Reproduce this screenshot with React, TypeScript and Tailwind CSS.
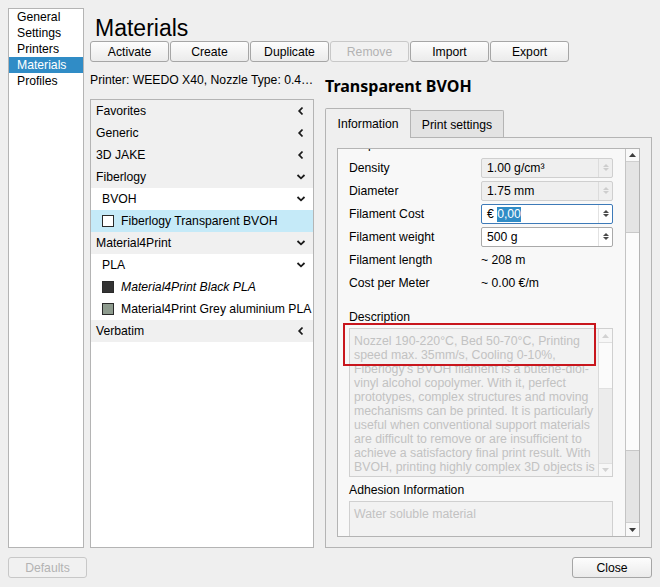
import React from "react";

type Dir = "left" | "down";

function Chevron({ dir }: { dir: Dir }) {
  return dir === "left" ? (
    <svg width="8" height="10" viewBox="0 0 8 10">
      <polyline points="5.5,1.5 2.2,5 5.5,8.5" fill="none" stroke="#1a1a1a" strokeWidth="1.8" />
    </svg>
  ) : (
    <svg width="10" height="8" viewBox="0 0 10 8">
      <polyline points="1.5,2 5,5.3 8.5,2" fill="none" stroke="#1a1a1a" strokeWidth="1.8" />
    </svg>
  );
}

function Tri({ up, color, w = 7, h = 4 }: { up: boolean; color: string; w?: number; h?: number }) {
  return (
    <svg width={w} height={h} viewBox={`0 0 ${w} ${h}`}>
      {up ? (
        <polygon points={`0,${h} ${w / 2},0 ${w},${h}`} fill={color} />
      ) : (
        <polygon points={`0,0 ${w / 2},${h} ${w},0`} fill={color} />
      )}
    </svg>
  );
}

function Btn({ label, disabled }: { label: string; disabled?: boolean }) {
  return (
    <div
      className={
        "w-[79px] h-[21px] flex items-center justify-center pt-[2px] leading-[15px] rounded-[3px] border " +
        (disabled
          ? "border-[#c8c8c8] bg-[#f1f1f1] text-[#b3b3b3]"
          : "border-[#a6a6a6] bg-linear-to-b from-[#fdfdfd] to-[#ebebeb] text-black")
      }
    >
      {label}
    </div>
  );
}

function Sidebar() {
  const items = ["General", "Settings", "Printers", "Materials", "Profiles"];
  return (
    <div className="w-[76px] border border-[#b4b4b4] bg-white">
      {items.map((i) => (
        <div
          key={i}
          className={
            "h-[16px] pl-[8px] leading-[14px] pt-[1px] pb-[1px] " +
            (i === "Materials" ? "bg-[#308cc6] text-white" : "")
          }
        >
          {i}
        </div>
      ))}
    </div>
  );
}

type Row = {
  t: "h" | "s" | "m";
  label: string;
  ch?: Dir;
  color?: string;
  selected?: boolean;
  italic?: boolean;
};

const rows: Row[] = [
  { t: "h", label: "Favorites", ch: "left" },
  { t: "h", label: "Generic", ch: "left" },
  { t: "h", label: "3D JAKE", ch: "left" },
  { t: "h", label: "Fiberlogy", ch: "down" },
  { t: "s", label: "BVOH", ch: "down" },
  { t: "m", label: "Fiberlogy Transparent BVOH", color: "#ffffff", selected: true },
  { t: "h", label: "Material4Print", ch: "down" },
  { t: "s", label: "PLA", ch: "down" },
  { t: "m", label: "Material4Print Black PLA", color: "#333333", italic: true },
  { t: "m", label: "Material4Print Grey aluminium PLA", color: "#8e9b8e" },
  { t: "h", label: "Verbatim", ch: "left" },
];

function MaterialList() {
  return (
    <div className="mt-[11px] flex-1 border border-[#b4b4b4] bg-white overflow-hidden">
      {rows.map((r) => {
        if (r.t === "m") {
          return (
            <div
              key={r.label}
              className={
                "h-[22px] flex items-center pl-[11px] whitespace-nowrap " +
                (r.selected ? "bg-[#c5eaf8]" : "bg-white")
              }
            >
              <div
                className="w-[12px] h-[12px] border border-[#2a2a2a] shrink-0"
                style={{ backgroundColor: r.color }}
              />
              <span className={"ml-[7px] " + (r.italic ? "italic" : "")}>{r.label}</span>
            </div>
          );
        }
        return (
          <div
            key={r.label}
            className={
              "h-[22px] flex items-center justify-between " +
              (r.t === "h" ? "pl-[5px] bg-[#f0f0f0]" : "pl-[11px] bg-white")
            }
          >
            <span>{r.label}</span>
            <div className="w-[16px] mr-[4px] flex justify-center items-center">
              <Chevron dir={r.ch!} />
            </div>
          </div>
        );
      })}
    </div>
  );
}

function Spin({
  value,
  state,
}: {
  value: React.ReactNode;
  state: "disabled" | "focused" | "normal";
}) {
  const box =
    state === "disabled"
      ? "border-[#cfcfcf] bg-[#efefef]"
      : state === "focused"
      ? "border-[#3d7ab8] bg-white"
      : "border-[#a9a9a9] bg-white";
  const arrow = state === "disabled" ? "#cdcdcd" : "#4a4a4a";
  const sep = state === "disabled" ? "border-[#dcdcdc]" : "border-[#e2e2e2]";
  return (
    <div className={"w-[132px] h-[20px] border rounded-[2px] flex " + box}>
      <div className="flex-1 pl-[5px] pt-[1px] flex items-center leading-[15px] whitespace-nowrap">{value}</div>
      <div className={"w-[14px] border-l flex flex-col items-center justify-center gap-[1px] " + sep}>
        <Tri up color={arrow} w={6} h={3} />
        <Tri up={false} color={arrow} w={6} h={3} />
      </div>
    </div>
  );
}

function PropRow({ label, children }: { label: string; children: React.ReactNode }) {
  return (
    <div className="h-[23px] flex items-center">
      <div className="w-[132px] leading-[15px] pt-[2px]">{label}</div>
      {children}
    </div>
  );
}

const descLines = [
  "Nozzel 190-220°C, Bed 50-70°C, Printing",
  "speed max. 35mm/s, Cooling 0-10%,",
  "Fiberlogy's BVOH filament is a butene-diol-",
  "vinyl alcohol copolymer. With it, perfect",
  "prototypes, complex structures and moving",
  "mechanisms can be printed. It is particularly",
  "useful when conventional support materials",
  "are difficult to remove or are insufficient to",
  "achieve a satisfactory final print result. With",
  "BVOH, printing highly complex 3D objects is",
  "now much easier. Support structures can be",
];

function DisabledScrollbar() {
  return (
    <div className="w-[14px] border-l border-[#dadada] flex flex-col">
      <div className="h-[14px] bg-[#f7f7f7] border-b border-[#e0e0e0] flex items-center justify-center">
        <Tri up color="#d2d2d2" />
      </div>
      <div className="h-[46px] bg-[#fbfbfb] border-b border-[#e0e0e0]" />
      <div className="flex-1 bg-[#ececec]" />
      <div className="h-[13px] bg-[#f7f7f7] border-t border-[#e0e0e0] flex items-center justify-center">
        <Tri up={false} color="#d2d2d2" />
      </div>
    </div>
  );
}

function ScrollContent() {
  return (
    <div className="flex-1 overflow-hidden relative">
      <div className="mt-[-12px] pl-[11px]">
        <div className="h-[15px] leading-[15px]">Properties</div>
        <div className="mt-[4px]">
          <PropRow label="Density">
            <Spin state="disabled" value="1.00 g/cm³" />
          </PropRow>
          <PropRow label="Diameter">
            <Spin state="disabled" value="1.75 mm" />
          </PropRow>
          <PropRow label="Filament Cost">
            <Spin
              state="focused"
              value={
                <>
                  <span>€&nbsp;</span>
                  <span className="bg-[#308cc6] text-white">0,00</span>
                </>
              }
            />
          </PropRow>
          <PropRow label="Filament weight">
            <Spin state="normal" value="500 g" />
          </PropRow>
          <PropRow label="Filament length">
            <span className="leading-[15px] pt-[2px]">~ 208 m</span>
          </PropRow>
          <PropRow label="Cost per Meter">
            <span className="leading-[15px] pt-[2px]">~ 0.00 €/m</span>
          </PropRow>
        </div>

        <div className="mt-[15px] h-[15px] pt-[1px] leading-[15px]">Description</div>
        <div className="mt-[4px] relative w-[264px]">
          <div className="h-[149px] border border-[#d0d0d0] bg-[#f2f2f2] flex overflow-hidden">
            <div className="flex-1 h-[147px] pl-[4px] pt-[5px] text-[#c2c2c2] text-[12.3px] leading-[14px] whitespace-nowrap overflow-hidden">
              {descLines.map((l) => (
                <div key={l}>{l}</div>
              ))}
            </div>
            <DisabledScrollbar />
          </div>
          <div className="absolute left-[-6px] top-[-5px] w-[253px] h-[43px] border-2 border-[#c8161d]" />
        </div>

        <div className="mt-[5px] h-[15px] pt-[1px] leading-[15px]">Adhesion Information</div>
        <div className="mt-[4px] w-[264px] h-[60px] border border-[#d0d0d0] bg-[#f2f2f2] pl-[4px] pt-[5px] text-[#c2c2c2] text-[12.3px] leading-[14px]">
          Water soluble material
        </div>
      </div>
    </div>
  );
}

function OuterScrollbar() {
  return (
    <div className="w-[14px] border-l border-[#c4c4c4] flex flex-col bg-[#e4e4e4]">
      <div className="h-[13px] bg-[#f9f9f9] border-b border-[#cfcfcf] flex items-center justify-center">
        <Tri up color="#3c3c3c" />
      </div>
      <div className="h-[70px]" />
      <div className="h-[219px] bg-[#fbfbfb] border-y border-[#c8c8c8]" />
      <div className="flex-1" />
      <div className="h-[14px] bg-[#f9f9f9] border-t border-[#cfcfcf] flex items-center justify-center">
        <Tri up={false} color="#3c3c3c" />
      </div>
    </div>
  );
}

export default function App() {
  return (
    <div className="w-[660px] h-[587px] bg-[#efefef] font-['Liberation_Sans',Arial,sans-serif] text-[12.2px] text-black flex flex-col px-[8px] pt-[8px] overflow-hidden">
      <div className="flex h-[540px]">
        <Sidebar />
        <div className="ml-[6px] w-[562px] flex flex-col">
          <div className="h-[33px] pt-[6px] pl-[5px] text-[23px] leading-[28px]">Materials</div>
          <div className="flex gap-[1px] h-[21px]">
            <Btn label="Activate" />
            <Btn label="Create" />
            <Btn label="Duplicate" />
            <Btn label="Remove" disabled />
            <Btn label="Import" />
            <Btn label="Export" />
          </div>
          <div className="flex flex-1 min-h-0">
            <div className="w-[224px] flex flex-col">
              <div className="mt-[11px] h-[15px] leading-[15px] whitespace-nowrap">
                Printer: WEEDO X40, Nozzle Type: 0.4…
              </div>
              <MaterialList />
            </div>
            <div className="ml-[11px] w-[327px] flex flex-col">
              <div className="mt-[14px] h-[20px] leading-[20px] font-['Noto_Sans','Open_Sans',sans-serif] font-bold text-[16px] whitespace-nowrap">
                Transparent BVOH
              </div>
              <div className="mt-[12px] h-[29px] flex items-end">
                <div className="relative z-10 w-[86px] h-[30px] mb-[-1px] pt-[2px] border-x border-t border-[#b4b4b4] rounded-t-[2px] bg-[#efefef] flex items-center justify-center leading-[15px]">
                  Information
                </div>
                <div className="w-[93px] h-[27px] pt-[2px] border-r border-t border-[#b4b4b4] rounded-tr-[2px] bg-[#e3e3e3] flex items-center justify-center leading-[15px]">
                  Print settings
                </div>
              </div>
              <div className="flex-1 min-h-0 border border-[#b4b4b4] bg-[#efefef] pt-[10px] pb-[10px] px-[11px] flex flex-col">
                <div className="flex-1 min-h-0 border border-[#b4b4b4] bg-[#f8f8f8] flex overflow-hidden">
                  <ScrollContent />
                  <OuterScrollbar />
                </div>
              </div>
            </div>
          </div>
        </div>
      </div>
      <div className="mt-[9px] h-[21px] flex justify-between">
        <div className="w-[80px]">
          <Btn label="Defaults" disabled />
        </div>
        <div className="w-[80px] h-[21px] pt-[2px] leading-[15px] flex items-center justify-center rounded-[3px] border border-[#a6a6a6] bg-linear-to-b from-[#fdfdfd] to-[#ebebeb]">
          Close
        </div>
      </div>
    </div>
  );
}
